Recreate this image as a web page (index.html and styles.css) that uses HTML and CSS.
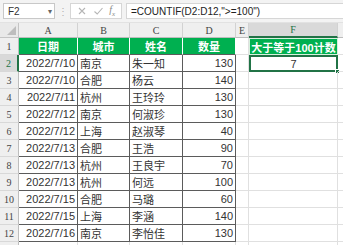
FILE: index.html
```html
<!DOCTYPE html>
<html lang="zh">
<head>
<meta charset="utf-8">
<link rel="stylesheet" href="styles.css">
</head>
<body>
<div class="app">
  <div class="fbar">
    <div class="namebox"><span class="ref">F2</span><span class="dd">▾</span></div>
    <div class="sep">⋮</div>
    <div class="btns">
      <svg class="ic" width="10" height="10" viewBox="0 0 10 10"><path d="M2 2 L8 8 M8 2 L2 8" stroke="#b5b5b5" stroke-width="1.1" fill="none"/></svg>
      <svg class="ic" width="11" height="10" viewBox="0 0 11 10"><path d="M1.5 5.5 L4.2 8 L9.5 2" stroke="#b5b5b5" stroke-width="1.1" fill="none"/></svg>
      <span class="fx">f<sub>x</sub></span>
    </div>
    <div class="formula">=COUNTIF(D2:D12,"&gt;=100")</div>
  </div>
  <div class="sheet">
    <div class="corner"><span class="tri"></span></div>
    <div class="ch">A</div><div class="ch">B</div><div class="ch">C</div><div class="ch">D</div><div class="ch">E</div><div class="ch sel">F</div><div class="ch last"></div>

    <div class="rh">1</div>
    <div class="c hd">日期</div><div class="c hd">城市</div><div class="c hd">姓名</div><div class="c hd">数量</div><div class="g"></div><div class="g hdf">大于等于100计数</div><div class="g last"></div>

    <div class="rh sel">2</div>
    <div class="c r">2022/7/10</div><div class="c">南京</div><div class="c">朱一知</div><div class="c r">130</div><div class="g"></div><div class="g active">7<span class="handle"></span></div><div class="g last"></div>

    <div class="rh">3</div>
    <div class="c r">2022/7/10</div><div class="c">合肥</div><div class="c">杨云</div><div class="c r">140</div><div class="g"></div><div class="g"></div><div class="g last"></div>

    <div class="rh">4</div>
    <div class="c r">2022/7/11</div><div class="c">杭州</div><div class="c">王玲玲</div><div class="c r">130</div><div class="g"></div><div class="g"></div><div class="g last"></div>

    <div class="rh">5</div>
    <div class="c r">2022/7/12</div><div class="c">南京</div><div class="c">何淑珍</div><div class="c r">130</div><div class="g"></div><div class="g"></div><div class="g last"></div>

    <div class="rh">6</div>
    <div class="c r">2022/7/12</div><div class="c">上海</div><div class="c">赵淑琴</div><div class="c r">40</div><div class="g"></div><div class="g"></div><div class="g last"></div>

    <div class="rh">7</div>
    <div class="c r">2022/7/13</div><div class="c">合肥</div><div class="c">王浩</div><div class="c r">90</div><div class="g"></div><div class="g"></div><div class="g last"></div>

    <div class="rh">8</div>
    <div class="c r">2022/7/13</div><div class="c">杭州</div><div class="c">王良宇</div><div class="c r">70</div><div class="g"></div><div class="g"></div><div class="g last"></div>

    <div class="rh">9</div>
    <div class="c r">2022/7/13</div><div class="c">杭州</div><div class="c">何远</div><div class="c r">100</div><div class="g"></div><div class="g"></div><div class="g last"></div>

    <div class="rh">10</div>
    <div class="c r">2022/7/15</div><div class="c">合肥</div><div class="c">马璐</div><div class="c r">60</div><div class="g"></div><div class="g"></div><div class="g last"></div>

    <div class="rh">11</div>
    <div class="c r">2022/7/15</div><div class="c">上海</div><div class="c">李涵</div><div class="c r">140</div><div class="g"></div><div class="g"></div><div class="g last"></div>

    <div class="rh">12</div>
    <div class="c r">2022/7/16</div><div class="c">南京</div><div class="c">李怡佳</div><div class="c r">130</div><div class="g"></div><div class="g"></div><div class="g last"></div>

    <div class="rh"></div>
    <div class="g"></div><div class="g"></div><div class="g"></div><div class="g"></div><div class="g"></div><div class="g"></div><div class="g last"></div>
  </div>
</div>
</body>
</html>
```

FILE: styles.css
```css
* { box-sizing: border-box; margin: 0; padding: 0; }
html, body { width: 343px; height: 245px; overflow: hidden; background: #fff; }
body { font-family: "Liberation Sans", "Noto Sans CJK SC", sans-serif; color: #333; }

.app { width: 343px; height: 245px; overflow: hidden; }

.fbar {
  height: 23px;
  display: flex;
  align-items: center;
  padding: 0 0 0 3px;
  background: #f3f3f3;
  border-bottom: 1px solid #e2e2e2;
}
.namebox {
  width: 52px; height: 16px;
  background: #fff;
  border: 1px solid #c8c8c8;
  display: flex; align-items: center; justify-content: space-between;
  padding: 0 2px 0 4px;
  font-size: 10px; color: #333;
}
.dd { font-size: 8px; color: #666; }
.sep { width: 15px; text-align: center; color: #b0b0b0; font-size: 10px; }
.btns {
  width: 52px; height: 16px;
  background: #fff;
  border: 1px solid #d6d6d6;
  display: flex; align-items: center; justify-content: space-around;
  padding: 0 3px;
}
.fx { font-family: "Liberation Serif", serif; font-style: italic; font-size: 10px; color: #8a8a8a; }
.fx sub { font-size: 7px; }
.formula {
  flex: 1; height: 16px; margin-left: 4px;
  background: #fff;
  border: 1px solid #d6d6d6; border-right: none;
  font-size: 10px; color: #222;
  display: flex; align-items: center; padding-left: 4px;
  white-space: nowrap;
}

.sheet {
  display: grid;
  grid-template-columns: 19px 59px 52px 53px 53px 13px 89px 20px;
  grid-template-rows: 15px repeat(13, 17px);
}
.corner {
  background: #e9e9e9;
  border-right: 1px solid #c4c4c4; border-bottom: 1px solid #c4c4c4;
  position: relative;
}
.tri {
  position: absolute; right: 2px; bottom: 2px;
  width: 0; height: 0;
  border-left: 9px solid transparent;
  border-bottom: 9px solid #bdbdbd;
}
.ch {
  background: #efefef;
  border-right: 1px solid #d2d2d2; border-bottom: 1px solid #bdbdbd;
  font-family: "Liberation Serif", serif; font-size: 10px; color: #444;
  display: flex; align-items: center; justify-content: center;
}
.ch.sel { background: #d9d9d9; border-bottom: 2px solid #217346; color: #217346; }
.rh {
  background: #efefef;
  border-right: 1px solid #bdbdbd; border-bottom: 1px solid #d8d8d8;
  font-family: "Liberation Serif", serif; font-size: 10px; color: #444;
  display: flex; align-items: center; justify-content: center;
}
.rh.sel { background: #d9d9d9; border-right: 2px solid #217346; color: #217346; }

.c {
  border-right: 1px solid #5b5b5b; border-bottom: 1px solid #5b5b5b;
  font-size: 11px; color: #333;
  display: flex; align-items: center; padding: 0 2px;
  white-space: nowrap; overflow: hidden;
}
.c.r { justify-content: flex-end; }
.c.hd {
  background: #00b050; color: #fff; font-weight: bold; justify-content: center;
  border-right-color: #fff; border-bottom-color: #5b5b5b;
}
.g {
  border-right: 1px solid #e0e0e0; border-bottom: 1px solid #e0e0e0;
  font-size: 11px; display: flex; align-items: center; justify-content: center;
  position: relative;
}
.g.last { border-right: none; }
.g.hdf {
  background: #00b050; color: #fff; font-weight: bold;
  border: 1px solid #d8f0de;
  white-space: nowrap;
}
.g.active { border: 2px solid #217346; color: #333; }
.handle {
  position: absolute; right: -4px; bottom: -4px;
  width: 5px; height: 5px; background: #217346; border: 1px solid #fff;
}
```
